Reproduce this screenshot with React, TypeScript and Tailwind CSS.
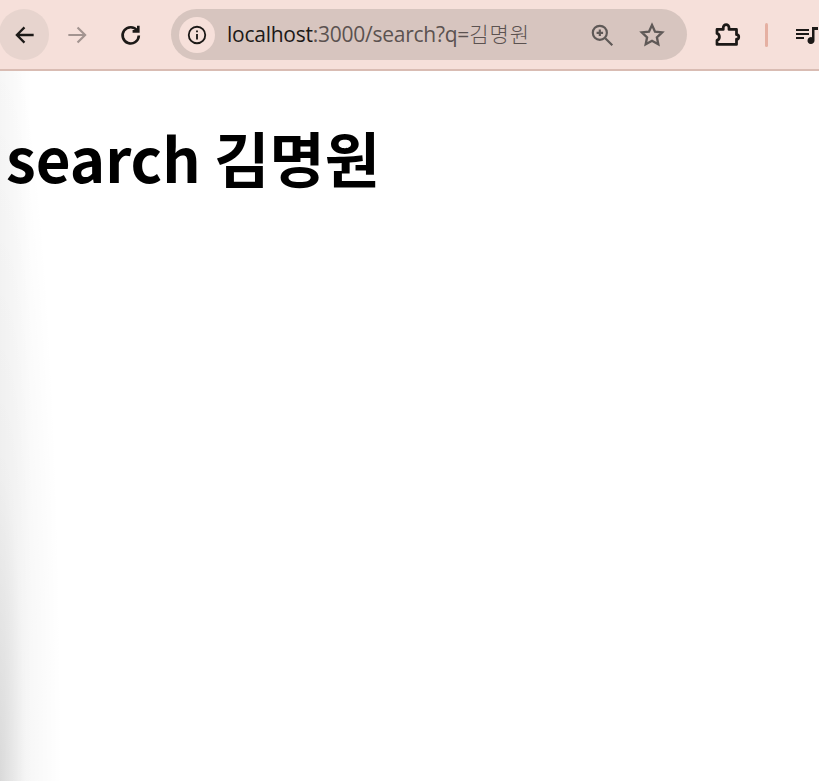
import React from "react";

const ToolbarIcon = ({ children, className = "", width = 2 }: { children: React.ReactNode; className?: string; width?: number }) => (
  <svg viewBox="0 0 24 24" fill="none" stroke="currentColor" strokeWidth={width} className={className}>
    {children}
  </svg>
);

export default function App() {
  return (
    <div className="relative h-[781px] w-[819px] overflow-hidden bg-white font-['Noto_Sans_CJK_KR',sans-serif] text-black">
      {/* browser toolbar */}
      <header className="flex h-[71px] items-center border-b-2 border-[#d9bcb3] bg-[#f6e0da]">
        <button className="flex h-[51px] w-[51px] -translate-x-[1px] items-center justify-center rounded-full bg-[#e7d4ce]">
          <ToolbarIcon className="h-[26px] w-[26px] translate-x-[1px] text-[#1c1917]" width={2.1}>
            <path d="M20 12H4.500M11.500 5l-7 7 7 7" />
          </ToolbarIcon>
        </button>
        <button className="ml-[1px] flex h-[51px] w-[51px] items-center justify-center">
          <ToolbarIcon className="h-[26px] w-[26px] translate-x-[1px] text-[#a39490]">
            <path d="M4 12h15.500M12.500 5l7 7-7 7" />
          </ToolbarIcon>
        </button>
        <button className="ml-[3px] flex h-[51px] w-[51px] items-center justify-center">
          <ToolbarIcon className="h-[25px] w-[25px] translate-x-[1px] text-[#1c1917]" width={2.5}>
            <path d="M18.500 8.200A7.800 7.800 0 1 0 20 13" />
            <path d="M19.500 3.500v5.500H14" />
          </ToolbarIcon>
        </button>

        {/* address bar */}
        <div className="ml-[17px] flex h-[51px] w-[516px] shrink-0 items-center rounded-full bg-[#d7c5bf] pl-[8px]">
          <span className="flex h-[36px] w-[36px] items-center justify-center rounded-full bg-[#f6e0da]">
            <ToolbarIcon className="h-[22px] w-[22px] text-[#1c1917]">
              <circle cx="12" cy="12" r="9" />
              <path d="M12 11v6M12 7v2" />
            </ToolbarIcon>
          </span>
          <span className="ml-[12px] w-[303px] font-['Open_Sans','Noto_Sans_CJK_KR',sans-serif] text-[21px] tracking-[-0.25px] whitespace-nowrap text-[#5b5250]">
            <span className="text-[#1c1917]">localhost</span>:3000/search?q=
            <span className="font-['Noto_Sans_CJK_KR',sans-serif] font-light tracking-[1px]">김명원</span>
          </span>
          <ToolbarIcon className="ml-[59px] h-[26px] w-[26px] shrink-0 text-[#5f5957]">
            <circle cx="10" cy="10" r="6.500" />
            <path d="M15 15l6.500 6.500M10 7v6M7 10h6" />
          </ToolbarIcon>
          <ToolbarIcon className="ml-[23px] h-[28px] w-[28px] shrink-0 text-[#5f5957]">
            <path d="M12 3.500l2.600 5.600 6.100.7-4.500 4.200 1.200 6L12 17l-5.400 3 1.200-6-4.500-4.200 6.100-.7z" />
          </ToolbarIcon>
        </div>

        <ToolbarIcon className="ml-[25px] h-[30px] w-[30px] shrink-0 text-[#1c1917]" width={2.200}>
          <path d="M4 7.500h5V6a2.300 2.300 0 0 1 4.600 0v1.500h6v4.200a1.800 1.800 0 0 1 0 3.600v4.200H4v-3.200a3 3 0 0 0 0-5.600z" strokeLinejoin="round" />
        </ToolbarIcon>
        <span className="ml-[23px] h-[24px] w-[3px] shrink-0 rounded-full bg-[#e5b0a2]" />
        <svg viewBox="0 0 24 24" fill="#1c1917" className="ml-[27px] h-[24px] w-[24px] shrink-0">
          <path d="M1 6h13v2H1zM1 10h13v2H1zM1 14h8v2H1zM17 4h6v3h-3.500v10.500a3.500 3.500 0 1 1-2.500-3.300z" />
        </svg>
      </header>

      <main className="px-[6px] pt-[46px]">
        <h1 className="text-[60px] leading-[80px] font-bold whitespace-nowrap">search 김명원</h1>
      </main>

      {/* window shadow on the left edge */}
      <div className="pointer-events-none absolute top-[71px] bottom-0 left-0 w-[70px] bg-[radial-gradient(ellipse_62px_780px_at_0px_100%,rgba(0,0,0,0.12),rgba(0,0,0,0.035)_40%,transparent_100%),linear-gradient(to_right,rgba(0,0,0,0.03),transparent_32px)]" />
    </div>
  );
}
